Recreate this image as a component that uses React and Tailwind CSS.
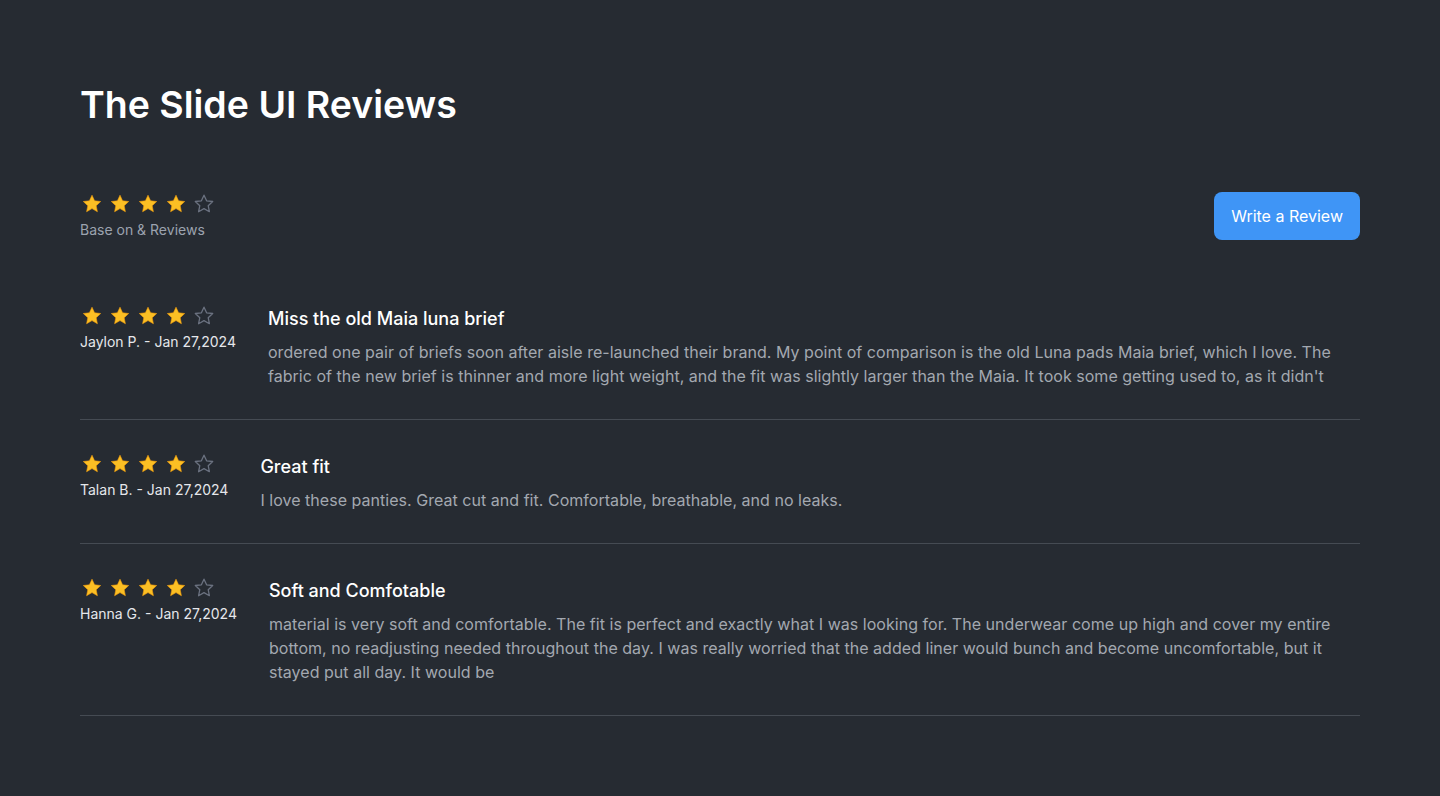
import React from 'react';

const reviews = [
  {
    id: 1,
    name: 'Jaylon P.',
    date: 'Jan 27,2024',
    rating: 4,
    title: 'Miss the old Maia luna brief',
    body: "ordered one pair of briefs soon after aisle re-launched their brand. My point of comparison is the old Luna pads Maia brief, which I love. The fabric of the new brief is thinner and more light weight, and the fit was slightly larger than the Maia. It took some getting used to, as it didn't"
  },
  {
    id: 2,
    name: 'Talan B.',
    date: 'Jan 27,2024',
    rating: 4,
    title: 'Great fit',
    body: 'I love these panties. Great cut and fit. Comfortable, breathable, and no leaks.'
  },
  {
    id: 3,
    name: 'Hanna G.',
    date: 'Jan 27,2024',
    rating: 4,
    title: 'Soft and Comfotable',
    body: 'material is very soft and comfortable. The fit is perfect and exactly what I was looking for. The underwear come up high and cover my entire bottom, no readjusting needed throughout the day. I was really worried that the added liner would bunch and become uncomfortable, but it stayed put all day. It would be'
  }
];

const Star = ({ filled }) => <svg className="w-6 h-6" viewBox="0 0 24 24">
      <path d="M12 3.2l2.6 5.6 6.1.7-4.5 4.2 1.2 6-5.4-3.1-5.4 3.1 1.2-6-4.5-4.2 6.1-.7z" fill={filled ? '#fbbf24' : 'none'} stroke={filled ? '#f59e0b' : '#6b7280'} strokeWidth={filled ? 0.6 : 1.3} strokeLinejoin="round" />
    </svg>;

const Stars = ({ rating }) => <div className="flex items-center gap-1">
      {[1, 2, 3, 4, 5].map(i => <Star key={i} filled={i <= rating} />)}
    </div>;

const ReviewRow = ({ review }) => {
  return <div className="flex gap-8 pt-8 pb-[31px] border-b border-[#454b53]">
            <div className="shrink-0">
                <Stars rating={review.rating} />
                <p className="mt-1 text-sm text-[#e5e7eb]">{review.name} - {review.date}</p>
            </div>
            <div className="flex-1 pt-px">
                <h3 className="text-lg font-medium text-white">{review.title}</h3>
                <p className="mt-[7px] text-base leading-6 text-[#a3a8b0] tracking-[0.002em]">{review.body}</p>
            </div>
        </div>;
};

const App = () => {
  return <div className="min-h-screen bg-[#262b32] px-20 pt-[85px] pb-20" style={{ fontFamily: 'Inter, "Noto Sans", sans-serif' }}>
            <h1 className="text-[37.5px] leading-10 font-semibold text-white">The Slide UI Reviews</h1>

            <div className="flex items-center justify-between mt-[67px]">
                <div>
                    <Stars rating={4} />
                    <p className="mt-1 text-sm leading-5 text-[#9ca3af]">Base on &amp; Reviews</p>
                </div>
                <button className="h-12 px-[17px] rounded-lg bg-[#3f95f6] text-white text-base">Write a Review</button>
            </div>

            <div className="mt-8">
                {reviews.map(review => <ReviewRow key={review.id} review={review} />)}
            </div>
        </div>;
};

export default App;
